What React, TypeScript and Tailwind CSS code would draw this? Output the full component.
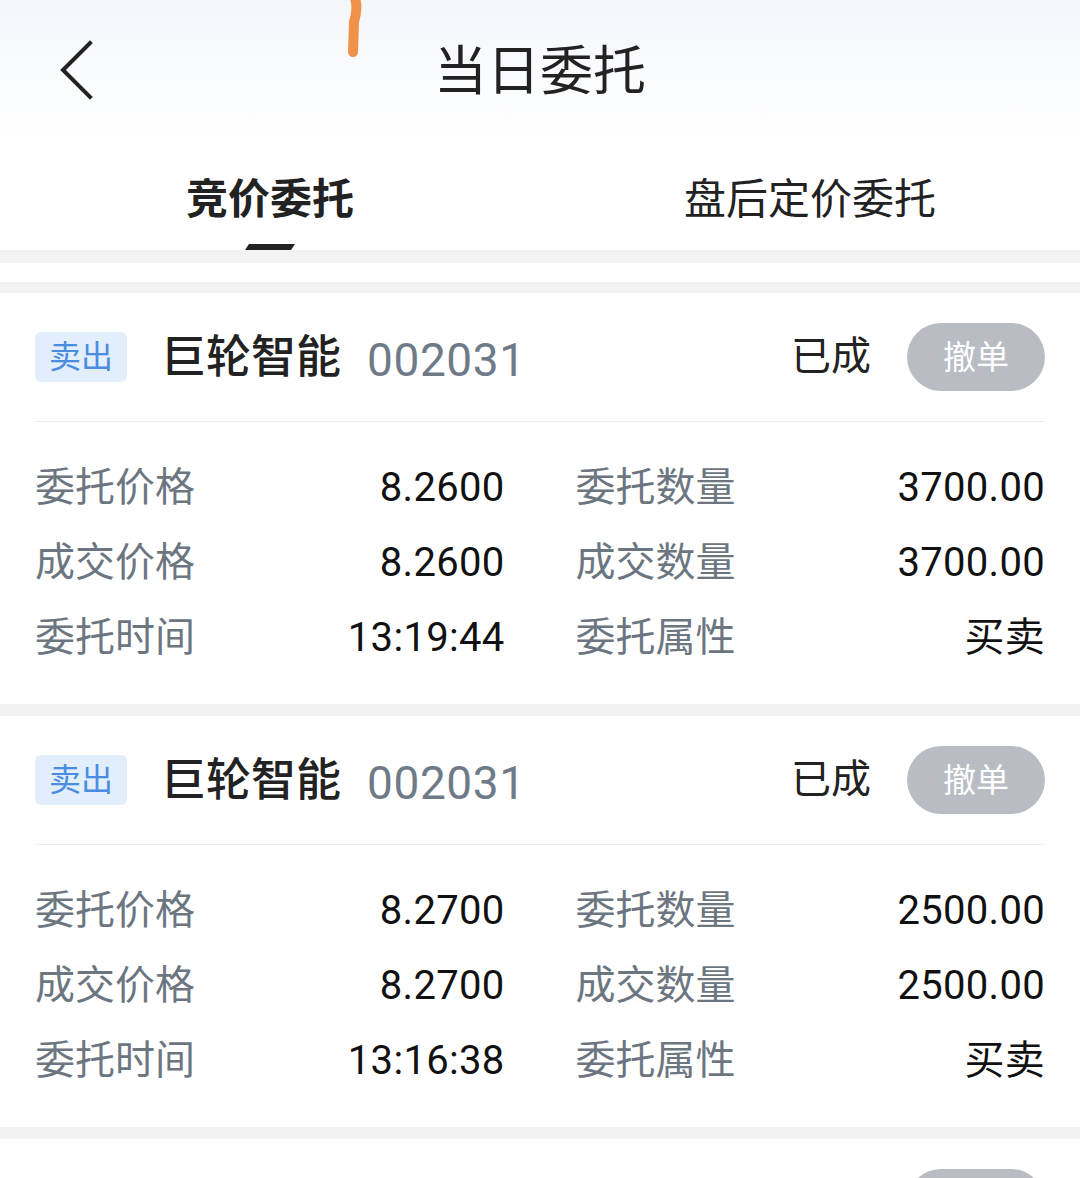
import React from 'react';

interface Order {
  price: string;
  qty: string;
  time: string;
}

const orders: Order[] = [
  { price: '8.2600', qty: '3700.00', time: '13:19:44' },
  { price: '8.2700', qty: '2500.00', time: '13:16:38' },
  { price: '8.2800', qty: '1200.00', time: '13:10:21' },
];

const font = { fontFamily: "Roboto, 'Noto Sans CJK SC', sans-serif" };

function Cell({ label, value }: { label: string; value: string }) {
  return (
    <div className="flex items-center justify-between h-[75px]">
      <span className="text-[40px] leading-none text-[#6c7681]">{label}</span>
      <span className="text-[40px] leading-none text-[#111] tracking-[0.3px]">{value}</span>
    </div>
  );
}

function OrderCard({ order }: { order: Order }) {
  return (
    <div className="bg-white px-[35px] pt-[30px] pb-[29px]">
      <div className="flex items-center h-[68px]">
        <span className="flex items-center justify-center w-[92px] h-[50px] rounded-[6px] bg-[#e2eefc] text-[32px] leading-none text-[#4a8ce0]">
          卖出
        </span>
        <span className="ml-[34px] text-[45px] leading-none text-[#222] font-medium">巨轮智能</span>
        <span className="ml-[26px] text-[46px] leading-none text-[#6e7a87] mt-[6px] tracking-[0.6px]">002031</span>
        <span className="ml-auto text-[40px] leading-none text-[#222]">已成</span>
        <button className="ml-[36px] w-[138px] h-[68px] rounded-full bg-[#b9bdc3] text-white text-[33px] leading-none">
          撤单
        </button>
      </div>
      <div className="mt-[30px] h-px bg-[#ececec]" />
      <div className="mt-[28px] grid grid-cols-2 gap-x-[71px]">
        <Cell label="委托价格" value={order.price} />
        <Cell label="委托数量" value={order.qty} />
        <Cell label="成交价格" value={order.price} />
        <Cell label="成交数量" value={order.qty} />
        <Cell label="委托时间" value={order.time} />
        <Cell label="委托属性" value="买卖" />
      </div>
    </div>
  );
}

export default function App() {
  return (
    <div className="relative w-[1080px] h-[1178px] overflow-hidden bg-[#f2f2f2]" style={font}>
      <div className="bg-white">
        <div className="relative flex items-center justify-center h-[140px] pt-[4px] bg-gradient-to-b from-[#f3f6fb] to-white">
          <svg className="absolute left-[58px] top-[40px]" width="40" height="60" viewBox="0 0 40 60" fill="none">
            <path d="M32 3 L5 30 L32 57" stroke="#222" strokeWidth="4" strokeLinecap="square" strokeLinejoin="miter" />
          </svg>
          <span className="text-[53px] leading-none text-[#222]">当日委托</span>
        </div>
        <div className="flex h-[110px]">
          <div className="flex-1 flex flex-col items-center pt-[35px]">
            <span className="text-[42px] leading-[50px] font-bold text-[#222]">竞价委托</span>
            <span className="mt-[19px] w-[50px] h-[6px] bg-[#222] [clip-path:polygon(8%_0,100%_0,92%_100%,0_100%)]" />
          </div>
          <div className="flex-1 flex flex-col items-center pt-[35px]">
            <span className="text-[42px] leading-[50px] text-[#222]">盘后定价委托</span>
          </div>
        </div>
      </div>
      <div className="h-[13px] bg-[#f2f2f2]" />
      <div className="h-[19px] bg-white" />
      <div className="mt-[11px] flex flex-col gap-[12px]">
        {orders.map((o, i) => (
          <OrderCard key={i} order={o} />
        ))}
      </div>
      <svg className="absolute left-[340px] top-0" width="30" height="60" viewBox="0 0 30 60" fill="none">
        <path d="M14 -4 C18 4 17 12 14 22 L13 52" stroke="#f0924a" strokeWidth="10" strokeLinecap="round" />
      </svg>
    </div>
  );
}
